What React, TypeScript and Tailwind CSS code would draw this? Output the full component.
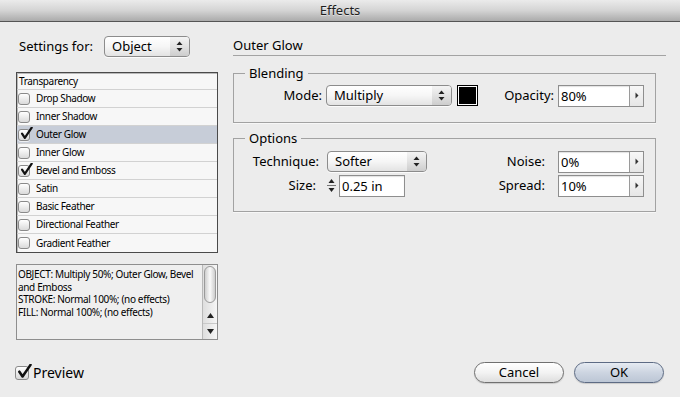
import React from "react";

function CheckMark({ w = 14, h = 14 }: { w?: number; h?: number }) {
  return (
    <svg width={w} height={h} viewBox="0 0 14 14" className="absolute left-[1px] top-[-3px]">
      <path d="M2.2 7.2 L5.2 11.6 L12.6 0.8" fill="none" stroke="#111" strokeWidth="2.4" strokeLinecap="round" strokeLinejoin="round" />
    </svg>
  );
}

function SmallCheck({ checked }: { checked?: boolean }) {
  return (
    <div className="relative w-[12px] h-[12px] shrink-0 rounded-[3px] border border-[#8a8a8a] bg-gradient-to-b from-white to-[#dadada] shadow-[0_1px_0_rgba(255,255,255,0.7)]">
      {checked && <CheckMark w={13} h={13} />}
    </div>
  );
}

function UpDown() {
  return (
    <svg width="7" height="11" viewBox="0 0 7 11">
      <path d="M3.5 0.5 L6.5 4 L0.5 4 Z" fill="#222" />
      <path d="M3.5 10.5 L6.5 7 L0.5 7 Z" fill="#222" />
    </svg>
  );
}

function PopUp({ value, w }: { value: string; w: string }) {
  return (
    <div className={`flex h-[21px] shrink-0 rounded-[4px] border border-[#8c8c8c] overflow-hidden shadow-[0_1px_0_rgba(255,255,255,0.8)] bg-gradient-to-b from-white via-[#f6f6f6] to-[#e3e3e3] ${w}`}>
      <div className="flex-1 pl-[7px] leading-[19px] text-[13px] text-black">{value}</div>
      <div className="w-[19px] flex items-center justify-center bg-gradient-to-b from-[#f4f4f4] via-[#e2e2e2] to-[#cdcdcd]">
        <UpDown />
      </div>
    </div>
  );
}

function NumField({ value }: { value: string }) {
  return (
    <div className="flex w-[86px] h-[22px] shrink-0 border border-[#8e8e8e] bg-white shadow-[inset_0_1px_1px_rgba(0,0,0,0.12)]">
      <div className="flex-1 pl-[2px] leading-[20px] text-[13px]">{value}</div>
      <div className="w-[14px] flex items-center justify-center border-l border-[#9a9a9a] bg-gradient-to-b from-[#f7f7f7] to-[#e6e6e6]">
        <svg width="4" height="7" viewBox="0 0 4 7">
          <path d="M0.5 0.5 L3.5 3.5 L0.5 6.5 Z" fill="#333" />
        </svg>
      </div>
    </div>
  );
}

const items: { label: string; checked?: boolean; selected?: boolean }[] = [
  { label: "Drop Shadow" },
  { label: "Inner Shadow" },
  { label: "Outer Glow", checked: true, selected: true },
  { label: "Inner Glow" },
  { label: "Bevel and Emboss", checked: true },
  { label: "Satin" },
  { label: "Basic Feather" },
  { label: "Directional Feather" },
  { label: "Gradient Feather" },
];

export default function App() {
  return (
    <div className="w-[680px] h-[397px] flex flex-col bg-[#ececec] overflow-hidden text-black font-['Noto_Sans',sans-serif] text-[13px]">
      {/* Title bar */}
      <div className="h-[22px] shrink-0 border-b border-[#555] bg-gradient-to-b from-[#ebebeb] via-[#d4d4d4] to-[#ababab] flex items-center justify-center">
        <span className="leading-[21px] text-[13px] text-[#1e1e1e] [text-shadow:0_1px_0_rgba(255,255,255,0.5)]">Effects</span>
      </div>

      {/* Body */}
      <div className="flex flex-1 pl-[16px] pr-[14px] pt-[14px]">
        {/* Left column */}
        <div className="w-[202px] flex flex-col">
          <div className="flex items-center h-[21px] pl-[3px]">
            <span className="w-[85px] whitespace-nowrap leading-[21px]">Settings for:</span>
            <PopUp value="Object" w="w-[86px]" />
          </div>

          <div className="mt-[15px] border border-[#4a4a4a] bg-[#f7f7f7] text-[10px] tracking-[-0.35px] shadow-[inset_1px_1px_0_rgba(0,0,0,0.25)]">
            <div className="h-[17px] border-b border-[#d2d2d2] pl-[2px] leading-[16px]">Transparency</div>
            {items.map((it, i) => (
              <div
                key={it.label}
                className={`h-[18px] flex items-center pl-[1px] ${i < items.length - 1 ? "border-b border-[#d2d2d2]" : ""} ${it.selected ? "bg-[#c7cdd8]" : ""}`}
              >
                <SmallCheck checked={it.checked} />
                <span className="ml-[6px] leading-[17px] whitespace-nowrap">{it.label}</span>
              </div>
            ))}
          </div>

          <div className="mt-[11px] h-[76px] flex border border-[#8e8e8e] bg-[#efefef]">
            <div className="flex-1 pl-[1px] pt-[3px] text-[10px] leading-[12.5px] tracking-[-0.35px] whitespace-nowrap">
              <div>OBJECT: Multiply 50%; Outer Glow, Bevel</div>
              <div>and Emboss</div>
              <div>STROKE: Normal 100%; (no effects)</div>
              <div>FILL: Normal 100%; (no effects)</div>
            </div>
            <div className="w-[15px] flex flex-col border-l border-[#b8b8b8] bg-gradient-to-r from-[#dedede] to-[#f6f6f6]">
              <div className="mx-[1px] mt-[1px] h-[37px] rounded-full border border-[#9a9a9a] bg-gradient-to-r from-[#cfcfcf] via-[#fafafa] to-[#cdcdcd]" />
              <div className="mt-auto h-[16px] flex items-center justify-center border-b border-[#c9c9c9]">
                <svg width="7" height="5" viewBox="0 0 7 5"><path d="M3.5 0 L7 5 L0 5 Z" fill="#222" /></svg>
              </div>
              <div className="h-[15px] flex items-center justify-center">
                <svg width="7" height="5" viewBox="0 0 7 5"><path d="M3.5 5 L7 0 L0 0 Z" fill="#222" /></svg>
              </div>
            </div>
          </div>
        </div>

        {/* Right column */}
        <div className="ml-[15px] flex-1 flex flex-col">
          <div className="h-[20px] border-b border-[#a3a3a3] leading-[19px]">Outer Glow</div>

          <fieldset className="mt-[9px] mr-[10px] border border-[#a2a2a2] pr-[11px] pt-[4px] pb-[16px] shadow-[0_1px_0_rgba(255,255,255,0.6)]">
            <legend className="ml-[11px] px-[4px] leading-[16px]">Blending</legend>
            <div className="flex items-center h-[21px]">
              <span className="w-[88px] text-right leading-[21px]">Mode:</span>
              <div className="ml-[4px]"><PopUp value="Multiply" w="w-[126px]" /></div>
              <div className="ml-[5px] w-[21px] h-[21px] border border-black bg-white p-[1px]">
                <div className="w-full h-full bg-black" />
              </div>
              <div className="flex-1" />
              <span className="text-right leading-[21px]">Opacity:</span>
              <div className="ml-[4px]"><NumField value="80%" /></div>
            </div>
          </fieldset>

          <fieldset className="mt-[7px] mr-[10px] border border-[#a2a2a2] pr-[11px] pt-[5px] pb-[15px] shadow-[0_1px_0_rgba(255,255,255,0.6)]">
            <legend className="ml-[11px] px-[4px] leading-[16px]">Options</legend>
            <div className="flex items-center h-[21px]">
              <span className="w-[85px] text-right leading-[21px]">Technique:</span>
              <div className="ml-[8px]"><PopUp value="Softer" w="w-[100px]" /></div>
              <div className="flex-1" />
              <span className="text-right leading-[21px]">Noise:</span>
              <div className="ml-[13px]"><NumField value="0%" /></div>
            </div>
            <div className="mt-[3px] flex items-center h-[21px]">
              <span className="w-[82px] text-right leading-[21px]">Size:</span>
              <div className="ml-[8px] w-[15px] h-[21px] flex items-center justify-center">
                <svg width="9" height="17" viewBox="0 0 9 17">
                  <path d="M4.5 2 L7.5 6 L1.5 6 Z" fill="#222" />
                  <line x1="0" y1="8.5" x2="9" y2="8.5" stroke="#777" strokeWidth="1" />
                  <path d="M4.5 15 L7.5 11 L1.5 11 Z" fill="#222" />
                </svg>
              </div>
              <div className="w-[66px] h-[22px] border border-[#8e8e8e] bg-white pl-[2px] leading-[20px] shadow-[inset_0_1px_1px_rgba(0,0,0,0.12)]">0.25 in</div>
              <div className="flex-1" />
              <span className="text-right leading-[21px]">Spread:</span>
              <div className="ml-[13px]"><NumField value="10%" /></div>
            </div>
          </fieldset>
        </div>
      </div>

      {/* Bottom row */}
      <div className="flex items-center h-[21px] mb-[14px] pl-[15px] pr-[16px]">
        <div className="relative w-[14px] h-[14px] rounded-[3px] border border-[#8a8a8a] bg-gradient-to-b from-white to-[#d8d8d8]">
          <CheckMark w={15} h={15} />
        </div>
        <span className="ml-[4px] text-[14px] leading-[21px]">Preview</span>
        <div className="flex-1" />
        <div className="w-[90px] h-[21px] rounded-full border border-[#707070] bg-gradient-to-b from-white via-[#f3f3f3] to-[#dedede] flex items-center justify-center leading-[19px] shadow-[0_1px_1px_rgba(0,0,0,0.15)]">Cancel</div>
        <div className="ml-[10px] w-[90px] h-[21px] rounded-full border border-[#5d6b84] bg-gradient-to-b from-[#e6ebf2] via-[#cdd5e1] to-[#bcc6d5] flex items-center justify-center leading-[19px] shadow-[0_1px_1px_rgba(0,0,0,0.15)]">OK</div>
      </div>
    </div>
  );
}
